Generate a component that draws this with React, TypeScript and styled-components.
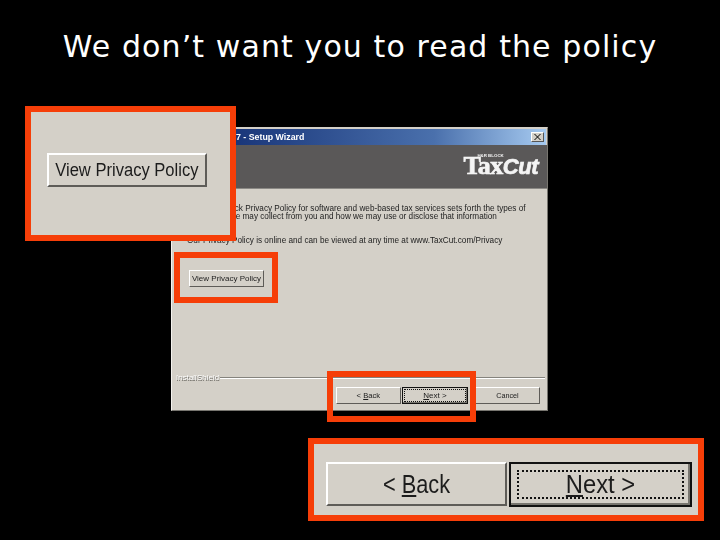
import React from "react";
import styled, { createGlobalStyle } from "styled-components";

const Global = createGlobalStyle`
  html, body {
    margin: 0;
    padding: 0;
    background: #000;
  }
`;

const Slide = styled.div`
  position: relative;
  width: 720px;
  height: 540px;
  overflow: hidden;
  background: #000;
  font-family: "DejaVu Sans", sans-serif;
`;

const Title = styled.h1`
  margin: 0;
  height: 127px;
  padding-top: 27px;
  box-sizing: border-box;
  text-align: center;
  color: #fff;
  font-size: 30px;
  line-height: 40px;
  font-weight: 400;
  letter-spacing: 1.1px;
  white-space: nowrap;
`;

const Wizard = styled.div`
  display: flex;
  flex-direction: column;
  box-sizing: border-box;
  width: 377px;
  height: 284px;
  margin-left: 171px;
  background: #d4d0c8;
  border-top: 1px solid #d4d0c8;
  border-left: 1px solid #f4f2ee;
  border-right: 1px solid #77756f;
  border-bottom: 1px solid #77756f;
  font-family: "Liberation Sans", sans-serif;
  font-size: 8.2px;
  color: #222;
  filter: blur(0.25px);
`;

const TitleBar = styled.div`
  display: flex;
  align-items: center;
  justify-content: space-between;
  height: 16px;
  margin: 1px 1px 0;
  padding: 0 2px 0 63px;
  background: linear-gradient(90deg, #0a246a 0%, #4a70ac 70%, #a6caf0 100%);
  color: #fff;
  font-weight: 700;
  font-size: 8.8px;
  white-space: nowrap;
`;

const CloseBox = styled.div`
  display: flex;
  align-items: center;
  justify-content: center;
  width: 13px;
  height: 10px;
  background: #d4d0c8;
  border: 1px solid;
  border-color: #fff #555 #555 #fff;
  box-sizing: border-box;
  svg {
    display: block;
  }
`;

const Banner = styled.div`
  display: flex;
  align-items: center;
  justify-content: flex-end;
  height: 43px;
  flex: none;
  padding-right: 9px;
  background: #5a5858;
  border-bottom: 1px solid #8b8985;
`;

const Logo = styled.div`
  position: relative;
  color: #f4f4f4;
  font-family: "Liberation Serif", serif;
  font-weight: 700;
  font-size: 26px;
  line-height: 20px;
  letter-spacing: -0.5px;
  -webkit-text-stroke: 0.7px #f4f4f4;
  white-space: nowrap;
`;

const LogoCut = styled.span`
  font-family: "Liberation Sans", sans-serif;
  font-style: italic;
  font-size: 22px;
`;

const LogoTag = styled.span`
  position: absolute;
  left: 14px;
  top: -3px;
  font-family: "Liberation Sans", sans-serif;
  font-size: 4.4px;
  line-height: 5px;
  letter-spacing: 0;
  -webkit-text-stroke: 0;
  white-space: nowrap;
`;

const Content = styled.div`
  flex: 1;
  padding: 16px 0 0 15px;
  line-height: 8px;
  white-space: nowrap;
`;

const Para = styled.p`
  margin: 0 0 16px;
`;

const Divider = styled.div`
  display: flex;
  align-items: center;
  gap: 1px;
  padding: 0 2px 0 4px;
  color: #fff;
  font-size: 8px;
  line-height: 8px;
  text-shadow: 0.5px 0.5px 0 #66645e;
`;

const Rule = styled.div`
  flex: 1;
  height: 2px;
  background: linear-gradient(#85837d 50%, #fff 50%);
`;

const Footer = styled.div`
  display: flex;
  justify-content: flex-end;
  gap: 6px;
  padding: 5px 7px 6px 0;
`;

const Pair = styled.div`
  display: flex;
  gap: 1px;
`;

const WinButton = styled.div<{ $w: number; $h: number; $size: number; $on?: boolean; $scale?: number }>`
  position: relative;
  display: flex;
  align-items: center;
  justify-content: center;
  box-sizing: border-box;
  width: ${(p) => p.$w}px;
  height: ${(p) => p.$h}px;
  flex: none;
  background: #d4d0c8;
  font-family: "Liberation Sans", sans-serif;
  font-size: ${(p) => p.$size}px;
  color: #1c1c1c;
  white-space: nowrap;
  border-style: solid;
  border-width: ${(p) => p.$scale ?? 1}px;
  border-color: ${(p) => (p.$on ? "#111" : "#fff #5e5c58 #5e5c58 #fff")};
  box-shadow: ${(p) => (p.$on ? `inset -${p.$scale ?? 1}px -${p.$scale ?? 1}px 0 #77756f` : "none")};
`;

const Label = styled.span<{ $sx: number }>`
  display: inline-block;
  transform: scaleX(${(p) => p.$sx});
`;

const PolicyButton = styled(WinButton)`
  margin: 25px 0 0 2px;
`;

const ZoomedPolicyButton = styled(WinButton)`
  margin: 0 0 7px 16px;
`;

const FocusRing = styled.span<{ $inset: number; $dot: number }>`
  position: absolute;
  inset: ${(p) => p.$inset}px;
  border: ${(p) => p.$dot}px dotted #111;
`;

const Callout = styled.div<{
  $x: number;
  $y: number;
  $w: number;
  $h: number;
  $filled?: boolean;
}>`
  position: absolute;
  left: ${(p) => p.$x}px;
  top: ${(p) => p.$y}px;
  width: ${(p) => p.$w}px;
  height: ${(p) => p.$h}px;
  box-sizing: border-box;
  border: 6px solid #f63e08;
  background: ${(p) => (p.$filled ? "#d4d0c8" : "transparent")};
  display: flex;
  align-items: center;
`;

const BigPair = styled.div`
  display: flex;
  gap: 2px;
  margin: 10px 0 0 12px;
`;

const App: React.FC = () => {
  return (
    <Slide>
      <Global />
      <Title>We don’t want you to read the policy</Title>

      <Wizard>
        <TitleBar>
          <span>7 - Setup Wizard</span>
          <CloseBox>
            <svg width="7" height="6" viewBox="0 0 7 6">
              <path d="M0.5 0 L6.5 6 M6.5 0 L0.5 6" stroke="#000" strokeWidth="1" />
            </svg>
          </CloseBox>
        </TitleBar>
        <Banner>
          <Logo>
            <LogoTag>H&amp;R BLOCK</LogoTag>
            Tax<LogoCut>Cut</LogoCut>
          </Logo>
        </Banner>
        <Content>
          <Para>
            The H&amp;R Block Privacy Policy for software and web-based tax services sets forth the types of
            <br />
            information we may collect from you and how we may use or disclose that information
          </Para>
          <Para>Our Privacy Policy is online and can be viewed at any time at www.TaxCut.com/Privacy</Para>
          <PolicyButton $w={75} $h={17} $size={8}>
            View Privacy Policy
          </PolicyButton>
        </Content>
        <Divider>
          <span>InstallShield</span>
          <Rule />
        </Divider>
        <Footer>
          <Pair>
            <WinButton $w={65} $h={17} $size={8}>
              <Label $sx={0.95}>
                &lt;&nbsp;<u>B</u>ack
              </Label>
            </WinButton>
            <WinButton $w={66} $h={17} $size={8} $on>
              <FocusRing $inset={1} $dot={1} />
              <Label $sx={1}>
                <u>N</u>ext &gt;
              </Label>
            </WinButton>
          </Pair>
          <WinButton $w={66} $h={17} $size={8}>
            <Label $sx={0.9}>Cancel</Label>
          </WinButton>
        </Footer>
      </Wizard>

      <Callout $x={25} $y={106} $w={211} $h={135} $filled>
        <ZoomedPolicyButton $w={160} $h={34} $size={18} $scale={2}>
          <Label $sx={0.92}>View Privacy Policy</Label>
        </ZoomedPolicyButton>
      </Callout>
      <Callout $x={174} $y={252} $w={104} $h={51} />
      <Callout $x={327} $y={371} $w={149} $h={51} />
      <Callout $x={308} $y={438} $w={396} $h={83} $filled>
        <BigPair>
          <WinButton $w={181} $h={44} $size={25} $scale={2}>
            <Label $sx={0.87}>
              &lt;&nbsp;<u>B</u>ack
            </Label>
          </WinButton>
          <WinButton $w={183} $h={45} $size={25} $scale={2} $on>
            <FocusRing $inset={6} $dot={2} />
            <Label $sx={0.95}>
              <u>N</u>ext &gt;
            </Label>
          </WinButton>
        </BigPair>
      </Callout>
    </Slide>
  );
};

export default App;
